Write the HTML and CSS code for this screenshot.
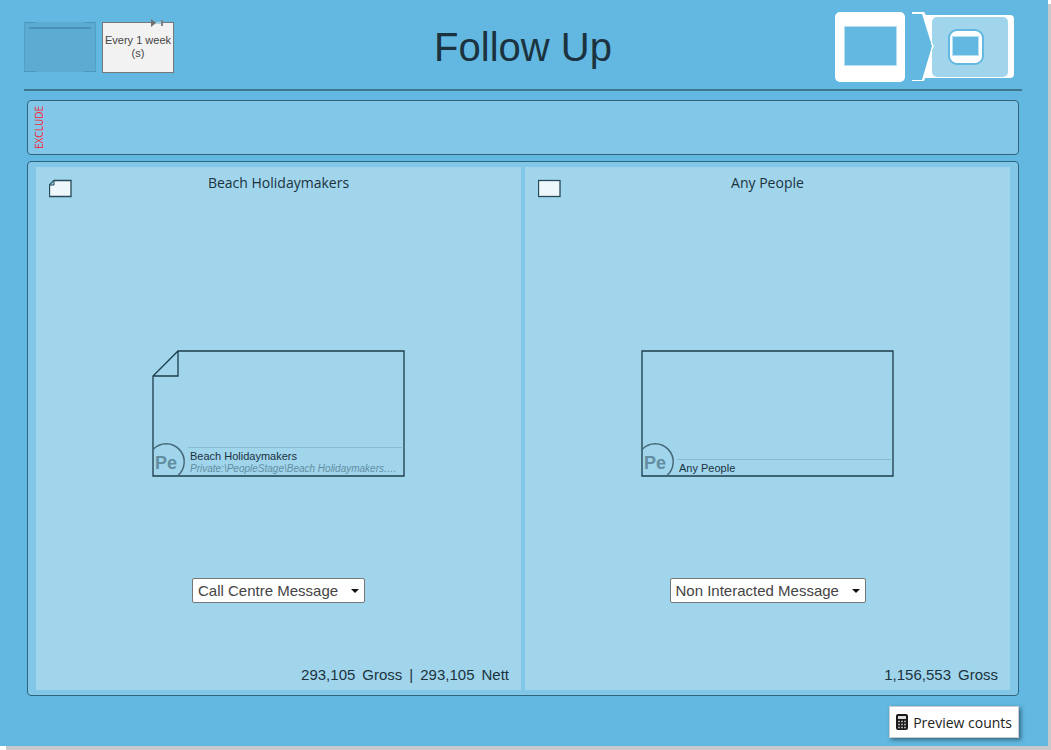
FILE: index.html
```html
<!DOCTYPE html>
<html lang="en">
<head>
    <meta charset="UTF-8">
    <meta name="viewport" content="width=device-width, initial-scale=1.0">
    <title>Follow Up</title>
    <link rel="stylesheet" href="styles.css">
</head>
<body>
    <main class="dialog">
        <header class="dialog-header">
            <div class="schedule">
                <svg class="schedule-icon" width="72" height="51" viewBox="0 0 72 51" aria-hidden="true">
                    <rect x="0" y="0" width="72" height="50" fill="#5babd2"/>
                    <path d="M.5 0v50M71.500 0v50" stroke="#519fc5"/>
                    <path d="M12 .5H0M12 49.500H0M60 .5h12M60 49.500h12" fill="none" stroke="#4b98be"/>
                    <path d="M5 6h62" stroke="#4a93b8" stroke-width="2"/>
                </svg>
                <button type="button" class="schedule-button">
                    Every 1 week (s)
                    <svg class="schedule-marker" width="14" height="8" viewBox="0 0 14 8" aria-hidden="true">
                        <path d="M5 4h5" stroke="#a9d0e2" stroke-width="2"/>
                        <path d="M0 0l5 4-5 4z" fill="#707070"/>
                        <path d="M11 1v6" stroke="#808080" stroke-width="2"/>
                    </svg>
                </button>
            </div>
            <h1 class="title">Follow Up</h1>
            <svg class="stage-icons" width="180" height="70" viewBox="0 0 180 70" aria-hidden="true">
                <rect x="0" y="0" width="70" height="70" rx="5" fill="#fff"/>
                <rect x="9.500" y="14.500" width="52" height="39" fill="#62b8e0" stroke="#b5dff2"/>
                <path d="M77 0h12l2 3h84a4 4 0 0 1 4 4v55a4 4 0 0 1-4 4H90l-1 3H77v-1h10L97 34 87 2H77z" fill="#fff"/>
                <rect x="97" y="5" width="76" height="60" rx="5" fill="#a0d5ec"/>
                <path d="M96 29l3 5-3 6 1-6z" fill="#fff"/>
                <rect x="114" y="18" width="34" height="34" rx="8" fill="#fff" stroke="#62b8e0" stroke-width="2"/>
                <rect x="117.500" y="24.500" width="26" height="19" fill="#62b8e0" stroke="#b5dff2"/>
            </svg>
        </header>

        <div class="content">
            <section class="exclude">
                <span class="exclude-label">EXCLUDE</span>
            </section>

            <section class="audiences">
                <article class="audience">
                    <div class="audience-header">
                        <svg width="23" height="19" viewBox="0 0 23 19" aria-hidden="true">
                            <path d="M5 1.500h17v16H.5V6z" fill="#eef8fc" stroke="#264858" stroke-width="1.300"/>
                            <path d="M5 1.500V6H.5z" fill="#a0d5ec" stroke="#264858"/>
                        </svg>
                        <h2 class="audience-title">Beach Holidaymakers</h2>
                    </div>
                    <div class="card-area">
                        <div class="card">
                            <svg class="card-outline" width="253" height="127" viewBox="0 0 253 127" aria-hidden="true">
                                <path d="M26 1h226v125H1V26zM26 1v25H1" fill="none" stroke="#1d3c4a" stroke-width="1.300"/>
                                <path d="M1 99.600A18 18 0 1 1 25.300 126" fill="none" stroke="#466878" stroke-width="1.500"/>
                            </svg>
                            <span class="badge">Pe</span>
                            <div class="card-text">
                                <div class="card-name">Beach Holidaymakers</div>
                                <div class="card-path">Private:\PeopleStage\Beach Holidaymakers.…</div>
                            </div>
                        </div>
                    </div>
                    <div class="message">
                        <select class="message-select" aria-label="Message for Beach Holidaymakers">
                            <option>Call Centre Message</option>
                        </select>
                    </div>
                    <div class="counts">
                        <span>293,105</span>
                        <span>Gross</span>
                        <span>|</span>
                        <span>293,105</span>
                        <span>Nett</span>
                    </div>
                </article>

                <article class="audience">
                    <div class="audience-header">
                        <svg width="23" height="19" viewBox="0 0 23 19" aria-hidden="true">
                            <rect x=".5" y="1.500" width="21.500" height="16" fill="#eef8fc" stroke="#264858" stroke-width="1.300"/>
                        </svg>
                        <h2 class="audience-title">Any People</h2>
                    </div>
                    <div class="card-area">
                        <div class="card">
                            <svg class="card-outline" width="253" height="127" viewBox="0 0 253 127" aria-hidden="true">
                                <path d="M1 1h251v125H1z" fill="none" stroke="#1d3c4a" stroke-width="1.300"/>
                                <path d="M1 99.600A18 18 0 1 1 25.300 126" fill="none" stroke="#466878" stroke-width="1.500"/>
                            </svg>
                            <span class="badge">Pe</span>
                            <div class="card-text">
                                <div class="card-name">Any People</div>
                            </div>
                        </div>
                    </div>
                    <div class="message">
                        <select class="message-select" aria-label="Message for Any People">
                            <option>Non Interacted Message</option>
                        </select>
                    </div>
                    <div class="counts">
                        <span>1,156,553</span>
                        <span>Gross</span>
                    </div>
                </article>
            </section>

            <footer class="dialog-footer">
                <button type="button" class="preview-button">
                    <svg width="12" height="16" viewBox="0 0 12 16" aria-hidden="true">
                        <rect width="12" height="16" rx="2" fill="#1a1a1a"/>
                        <path d="M2 2h8v3H2z" fill="#ddd"/>
                        <path d="M2 7.500h2M5 7.500h2M8 7.500h2M2 10.500h2M5 10.500h2M8 10.500h2M2 13.500h2M5 13.500h2M8 13.500h2" stroke="#aaa" stroke-width="1.500"/>
                    </svg>
                    Preview counts
                </button>
            </footer>
        </div>
    </main>
</body>
</html>
```

FILE: styles.css
```css
* {
    box-sizing: border-box;
}
body {
    margin: 0;
    background-color: #fff;
    font-family: "Liberation Sans", Arial, sans-serif;
    color: #1c333f;
    overflow: hidden;
}
.dialog {
    display: flex;
    flex-direction: column;
    min-height: calc(100vh - 4px);
    margin: 0 3px 4px 0;
    padding: 0 26px 8px 24px;
    background-color: #62b8e0;
    box-shadow: 6px 4px 0 #c8c9ca;
}
.dialog-header {
    display: grid;
    grid-template-columns: 1fr auto 1fr;
    height: 91px;
    padding-top: 12px;
    border-bottom: 2px solid #3f7791;
}
.schedule {
    display: flex;
    gap: 6px;
    padding-top: 10px;
}
.schedule-button {
    position: relative;
    width: 72px;
    height: 51px;
    padding: 0 0 2px;
    border: 1px solid #777;
    background-color: #f2f2f2;
    color: #444;
    font-family: inherit;
    font-size: 11px;
    line-height: 13px;
}
.schedule-marker {
    position: absolute;
    top: -4px;
    right: 8px;
}
.title {
    margin: 0;
    font-size: 40px;
    font-weight: normal;
    line-height: 70px;
}
.stage-icons {
    justify-self: end;
    margin-right: 7px;
}
.content {
    display: flex;
    flex-direction: column;
    flex: 1;
    gap: 6px;
    padding: 9px 3px 0;
}
.exclude,
.audiences {
    border: 1px solid #2e647e;
    border-radius: 4px;
    background-color: #82c7e7;
}
.exclude {
    height: 55px;
    padding: 5px;
}
.exclude-label {
    display: block;
    writing-mode: vertical-rl;
    transform: rotate(180deg);
    width: 12px;
    color: #ff2030;
    font-family: "Open Sans", sans-serif;
    font-size: 10px;
    line-height: 12px;
}
.audiences {
    display: flex;
    flex: 1;
    gap: 4px;
    padding: 5px 8px;
}
.audience {
    display: flex;
    flex-direction: column;
    flex: 1;
    padding: 6px 12px 5px;
    background-color: #a0d5ec;
}
.audience-header {
    display: grid;
    grid-template-columns: 1fr auto 1fr;
}
.audience-header svg {
    margin: 6px 0 0 1px;
}
.audience-title {
    margin: 0;
    font-family: "Open Sans", sans-serif;
    font-size: 14px;
    font-weight: normal;
    line-height: 20px;
}
.card-area {
    display: flex;
    flex: 1;
    align-items: flex-end;
    justify-content: center;
    padding-bottom: 101px;
}
.card {
    position: relative;
    display: flex;
    align-items: flex-end;
    width: 253px;
    height: 127px;
    padding: 0 3px 2px;
}
.card-outline {
    position: absolute;
    top: 0;
    left: 0;
}
.badge {
    width: 33px;
    color: #638ea1;
    font-size: 18px;
    font-weight: bold;
    line-height: 24px;
}
.card-text {
    flex: 1;
    min-width: 0;
    padding-left: 2px;
    border-top: 1px solid #8abacf;
}
.card-name {
    padding-top: 2px;
    font-size: 11px;
    line-height: 13px;
}
.card-path {
    overflow: hidden;
    color: #638ea1;
    font-size: 10px;
    font-style: italic;
    line-height: 12px;
    white-space: nowrap;
}
.message {
    position: relative;
    align-self: center;
    margin-bottom: 61px;
}
.message::after {
    content: "";
    position: absolute;
    top: 11px;
    right: 6px;
    border: 4px solid transparent;
    border-top-color: #111;
    border-bottom: 0;
    pointer-events: none;
}
.message-select {
    display: block;
    height: 25px;
    padding: 0 25px 0 5px;
    border: 1px solid #777;
    border-radius: 2px;
    appearance: none;
    background-color: #fff;
    color: #444;
    font-family: inherit;
    font-size: 15px;
}
.counts {
    display: flex;
    justify-content: flex-end;
    gap: 7px;
    font-size: 15px;
    line-height: 21px;
}
.dialog-footer {
    display: flex;
    justify-content: flex-end;
    padding-top: 4px;
}
.preview-button {
    display: flex;
    align-items: center;
    gap: 5px;
    height: 32px;
    padding: 0 6px;
    border: 1px solid #ccc;
    background-color: #fff;
    box-shadow: 2px 2px 4px #356a84;
    color: #222;
    font-family: "Open Sans", sans-serif;
    font-size: 14px;
}
```
